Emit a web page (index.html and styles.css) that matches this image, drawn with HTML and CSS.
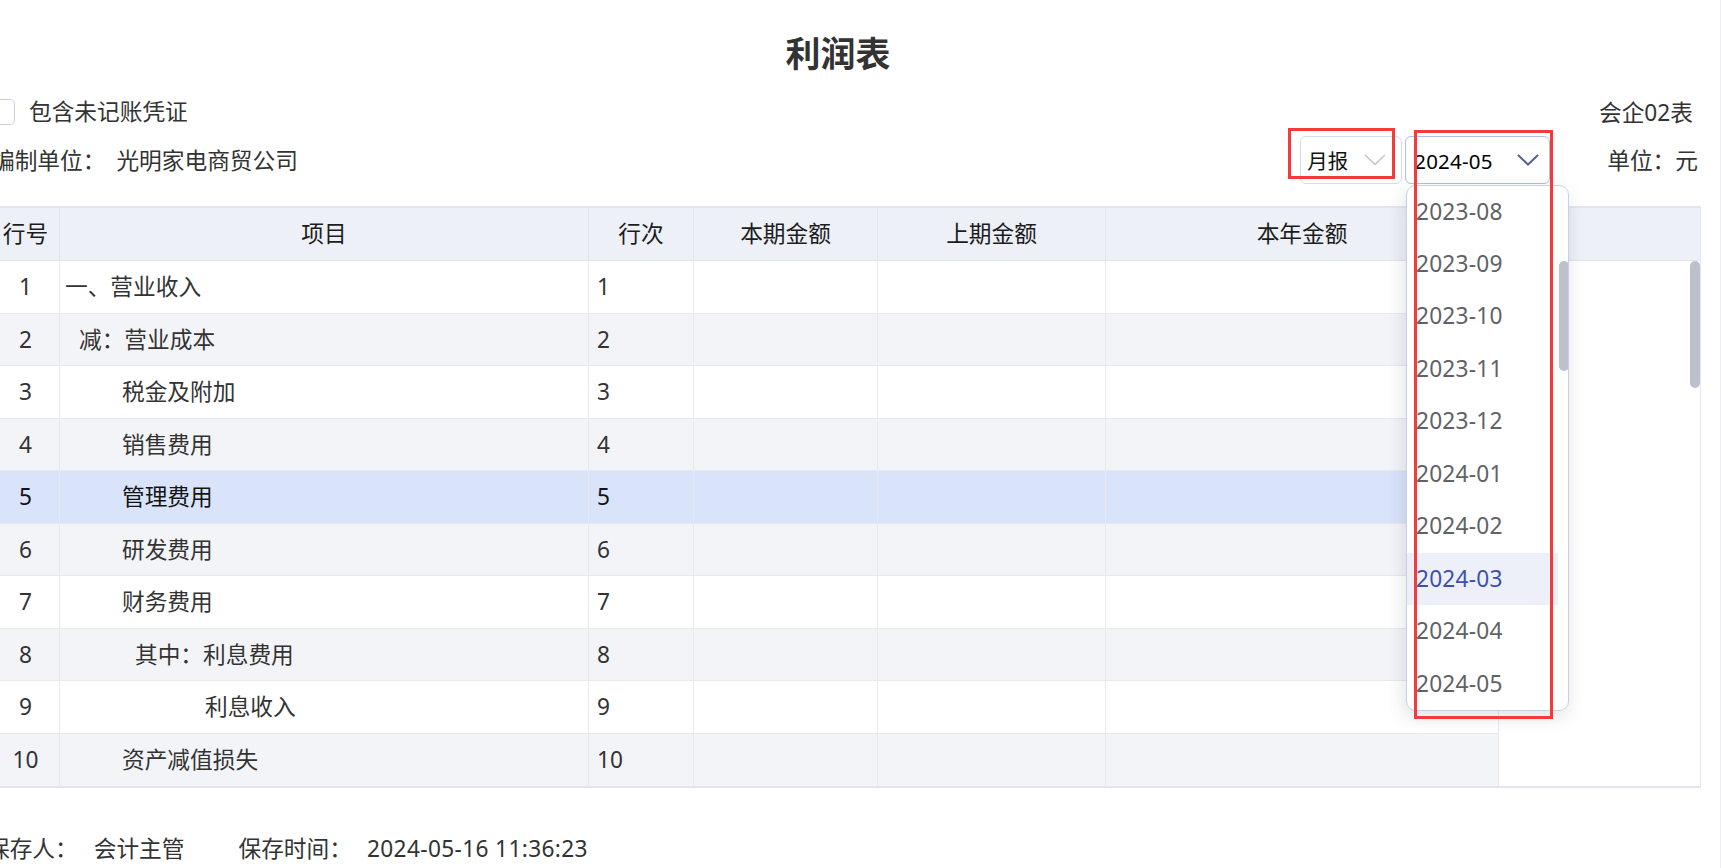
FILE: index.html
```html
<!DOCTYPE html>
<html lang="zh-CN">
<head>
<meta charset="utf-8">
<title>利润表</title>
<link rel="stylesheet" href="styles.css">
</head>
<body>
<div class="page">
  <h1 class="title">利润表</h1>

  <div class="opt-row">
    <label class="check">
      <span class="box"></span>
      <span class="check-label">包含未记账凭证</span>
    </label>
    <span class="form-no">会企02表</span>
  </div>

  <div class="unit-row">
    <div class="org">
      <span class="org-label">编制单位：</span>
      <span class="org-name">光明家电商贸公司</span>
    </div>
    <div class="selects">
      <div class="select sel-type">
        <span class="sel-text">月报</span>
        <svg class="chev" width="22" height="12" viewBox="0 0 22 12"><polyline points="1,1 11,10.5 21,1" fill="none" stroke="#c0c4d3" stroke-width="1.6"/></svg>
      </div>
      <div class="select sel-period">
        <span class="sel-text">2024-05</span>
        <svg class="chev" width="22" height="12" viewBox="0 0 22 12"><polyline points="1,1 11,10.5 21,1" fill="none" stroke="#59628f" stroke-width="2"/></svg>
      </div>
    </div>
    <span class="unit">单位：元</span>
  </div>

  <div class="table">
    <div class="thead">
      <div class="th">行号</div>
      <div class="th">项目</div>
      <div class="th">行次</div>
      <div class="th">本期金额</div>
      <div class="th">上期金额</div>
      <div class="th">本年金额</div>
      <div class="th gutter"></div>
    </div>
    <div class="tbody">
      <div class="tr"><div class="td num">1</div><div class="td item i0">一、营业收入</div><div class="td seq">1</div><div class="td"></div><div class="td"></div><div class="td"></div><div class="filler"></div></div>
      <div class="tr alt"><div class="td num">2</div><div class="td item i1">减：营业成本</div><div class="td seq">2</div><div class="td"></div><div class="td"></div><div class="td"></div><div class="filler"></div></div>
      <div class="tr"><div class="td num">3</div><div class="td item i2">税金及附加</div><div class="td seq">3</div><div class="td"></div><div class="td"></div><div class="td"></div><div class="filler"></div></div>
      <div class="tr alt"><div class="td num">4</div><div class="td item i2">销售费用</div><div class="td seq">4</div><div class="td"></div><div class="td"></div><div class="td"></div><div class="filler"></div></div>
      <div class="tr current"><div class="td num">5</div><div class="td item i2">管理费用</div><div class="td seq">5</div><div class="td"></div><div class="td"></div><div class="td"></div><div class="filler"></div></div>
      <div class="tr alt"><div class="td num">6</div><div class="td item i2">研发费用</div><div class="td seq">6</div><div class="td"></div><div class="td"></div><div class="td"></div><div class="filler"></div></div>
      <div class="tr"><div class="td num">7</div><div class="td item i2">财务费用</div><div class="td seq">7</div><div class="td"></div><div class="td"></div><div class="td"></div><div class="filler"></div></div>
      <div class="tr alt"><div class="td num">8</div><div class="td item i3">其中：利息费用</div><div class="td seq">8</div><div class="td"></div><div class="td"></div><div class="td"></div><div class="filler"></div></div>
      <div class="tr"><div class="td num">9</div><div class="td item i4">利息收入</div><div class="td seq">9</div><div class="td"></div><div class="td"></div><div class="td"></div><div class="filler"></div></div>
      <div class="tr alt last"><div class="td num">10</div><div class="td item i2">资产减值损失</div><div class="td seq">10</div><div class="td"></div><div class="td"></div><div class="td"></div><div class="filler"></div></div>
      <div class="table-thumb"></div>
    </div>
  </div>

  <div class="footer">
    <span class="f-label">保存人：</span><span class="f-val">会计主管</span><span class="f-label f-gap">保存时间：</span><span class="f-val f-time">2024-05-16 11:36:23</span>
  </div>

  <div class="dropdown">
    <div class="opt">2023-08</div>
    <div class="opt">2023-09</div>
    <div class="opt">2023-10</div>
    <div class="opt">2023-11</div>
    <div class="opt">2023-12</div>
    <div class="opt">2024-01</div>
    <div class="opt">2024-02</div>
    <div class="opt active">2024-03</div>
    <div class="opt">2024-04</div>
    <div class="opt">2024-05</div>
    <div class="dd-thumb"></div>
  </div>

  <div class="mark mark-type"></div>
  <div class="mark mark-period"></div>
</div>
</body>
</html>
```

FILE: styles.css
```css
html, body {
  margin: 0;
  padding: 0;
  background: #ffffff;
}
body {
  width: 1720px;
  height: 868px;
  overflow: hidden;
  border-right: 1px solid #eceef3;
  font-family: "Noto Sans", "Noto Sans CJK SC", sans-serif;
  font-size: 22.7px;
  color: #333333;
}
.page {
  position: relative;
  margin-left: -8px;
  width: 1709px;
  height: 868px;
}
.title {
  margin: 0;
  padding-top: 30px;
  padding-right: 17px;
  height: 48px;
  line-height: 48px;
  text-align: center;
  font-size: 35px;
  font-weight: 700;
  color: #333333;
}

/* option row */
.opt-row {
  margin-top: 12px;
  height: 44px;
  display: flex;
  align-items: center;
  justify-content: space-between;
}
.check {
  display: flex;
  align-items: center;
  margin-left: -3px;
}
.box {
  width: 26px;
  height: 26px;
  box-sizing: border-box;
  border: 1.5px solid #c9cfe4;
  border-radius: 5px;
  background: #fff;
}
.check-label {
  margin-left: 14px;
  line-height: 30px;
}
.form-no {
  margin-right: 8px;
  padding-top: 2px;
  line-height: 30px;
}

/* unit row */
.unit-row {
  margin-top: 2px;
  height: 48px;
  display: flex;
  align-items: center;
}
.org {
  display: flex;
  align-items: center;
  line-height: 30px;
  padding-top: 2px;
}
.org-name {
  margin-left: 11px;
}
.selects {
  margin-left: auto;
  display: flex;
  gap: 3px;
}
.select {
  height: 48px;
  box-sizing: border-box;
  border: 1px solid #d6daee;
  border-radius: 6px;
  display: flex;
  align-items: center;
  background: #fff;
}
.sel-text {
  font-size: 20.5px;
  line-height: 30px;
  color: #111;
  padding-top: 2px;
}
.sel-type {
  width: 102px;
  padding-left: 6px;
}
.sel-type .chev {
  margin-left: 16px;
}
.sel-period {
  width: 145px;
  padding-left: 8px;
  border-color: #b3bcef;
}
.sel-period .sel-text {
  color: #000;
  letter-spacing: 0.2px;
}
.sel-period .chev {
  margin-left: 24px;
}
.unit {
  margin-left: 57px;
  margin-right: 3px;
  line-height: 30px;
  padding-top: 2px;
}

/* table */
.table {
  margin-top: 22px;
  border-top: 2px solid #e3e6ee;
  border-bottom: 2px solid #e3e6ee;
  border-right: 1px solid #e6e8ee;
}
.thead, .tr {
  display: grid;
  grid-template-columns: 68px 529px 105px 184px 228px 393px 1fr;
}
.thead {
  background: #edf0f7;
  border-bottom: 1px solid #e0e4ec;
  height: 52px;
}
.th {
  line-height: 52px;
  text-align: center;
  color: #1c1c1c;
  border-right: 1px solid #e0e4ee;
}
.th.gutter {
  border-right: 0;
}
.tbody {
  position: relative;
}
.tr {
  height: 52.5px;
}
.td {
  box-sizing: border-box;
  height: 52.5px;
  line-height: 52px;
  border-right: 1px solid #e7e9ee;
  border-bottom: 1px solid #e7e9ee;
  background: #ffffff;
  white-space: nowrap;
}
.tr.alt .td {
  background: #f3f4f8;
}
.tr.current .td {
  background: #d9e4fb;
  color: #141414;
}
.tr.last .td {
  border-bottom: 0;
}
.num {
  text-align: center;
}
.seq {
  padding-left: 8px;
}
.item.i0 { padding-left: 5px; }
.item.i1 { padding-left: 19px; }
.item.i2 { padding-left: 62px; }
.item.i3 { padding-left: 75px; }
.item.i4 { padding-left: 145px; }
.filler {
  background: #fff;
}
.table-thumb {
  position: absolute;
  right: 0;
  top: 0;
  width: 10px;
  height: 127px;
  border-radius: 5px;
  background: #bcc0cc;
}

/* footer */
.footer {
  margin-top: 46px;
  margin-left: -5px;
  line-height: 30px;
  white-space: nowrap;
}
.f-val {
  margin-left: 16px;
}
.f-gap {
  margin-left: 54px;
}
.f-time {
  margin-left: 15px;
  letter-spacing: 0.35px;
}

/* dropdown overlay */
.dropdown {
  position: absolute;
  left: 1414px;
  top: 185px;
  width: 163px;
  height: 526px;
  box-sizing: border-box;
  border: 1px solid #cbd0e4;
  border-radius: 10px;
  background: #fff;
  box-shadow: -2px 6px 18px rgba(40, 50, 80, 0.14);
  overflow: hidden;
}
.opt {
  height: 52.5px;
  line-height: 52.5px;
  padding-left: 9px;
  margin-right: 10px;
  color: #606266;
  font-size: 22.7px;
  letter-spacing: 0.2px;
}
.opt:first-child {
  height: 51.5px;
  line-height: 51.5px;
}
.opt.active {
  background: #edf0f8;
  color: #3e4fb2;
}
.dd-thumb {
  position: absolute;
  right: -1px;
  top: 75px;
  width: 10px;
  height: 110px;
  border-radius: 5px;
  background: #bcc1cd;
}

/* red annotation boxes */
.mark {
  position: absolute;
  box-sizing: border-box;
  border: 3px solid #f43b3b;
}
.mark-type {
  left: 1296px;
  top: 128px;
  width: 107px;
  height: 51px;
}
.mark-period {
  left: 1422px;
  top: 130px;
  width: 139px;
  height: 589px;
}
```
